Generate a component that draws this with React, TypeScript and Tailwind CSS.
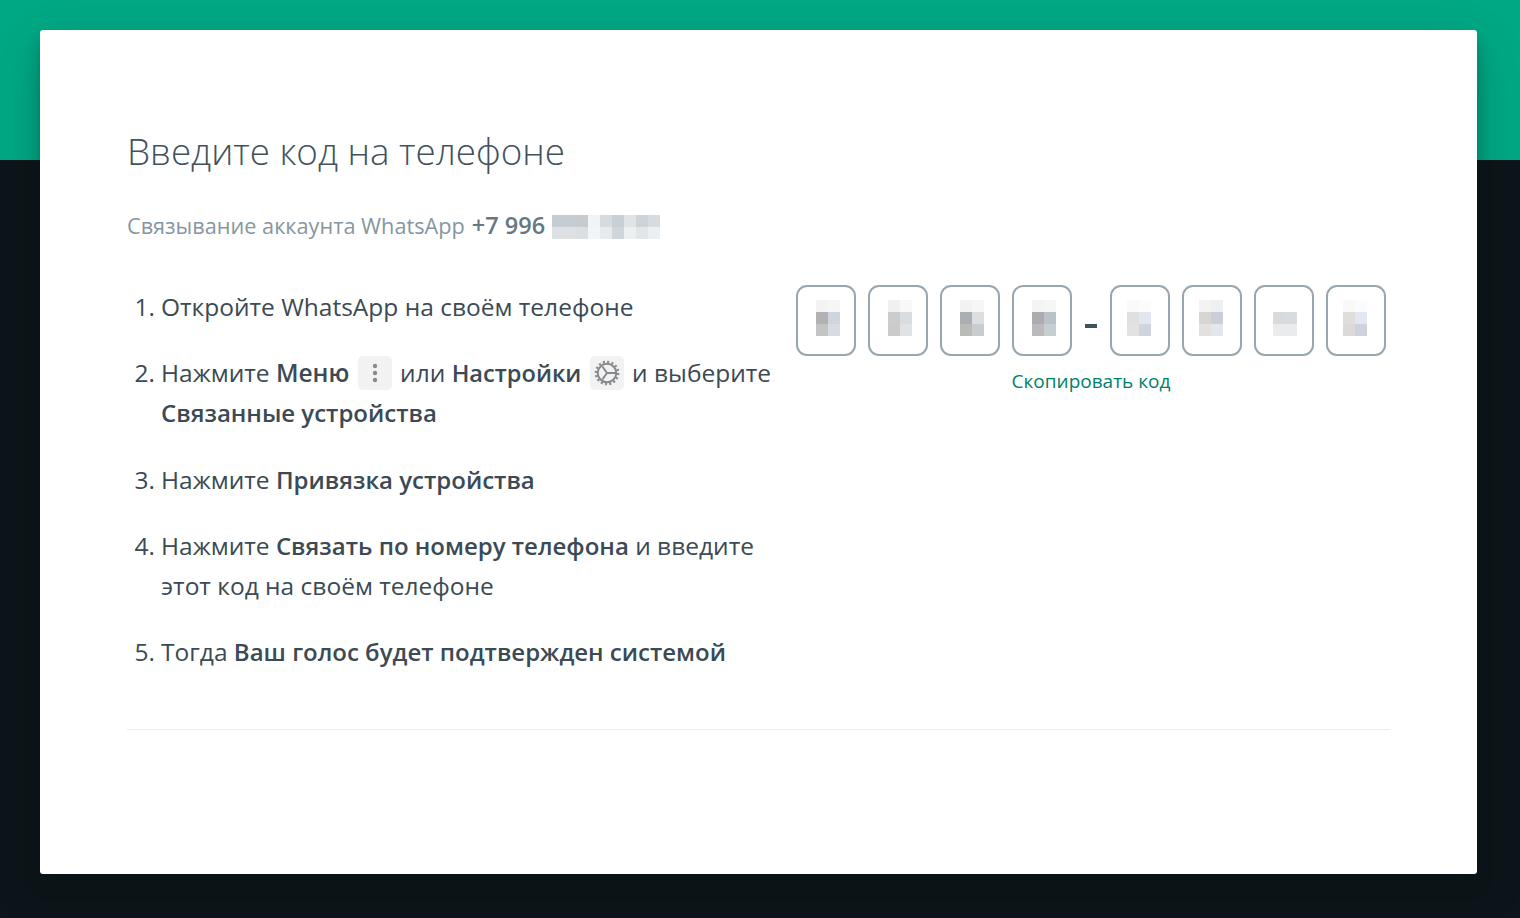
const FONT = "font-['Open_Sans','Noto_Sans',sans-serif]";

const phoneCells = [
  "bg-[#c5cdd2]", "bg-[#c5cdd2]", "bg-[#c5cbcf]", "bg-[#f0f4f8]", "bg-[#d5dbdf]", "bg-[#c8d0d6]", "bg-[#e0e4e6]", "bg-[#ccd4da]", "bg-[#d5dbdf]",
  "bg-[#dde1e4]", "bg-[#dde1e4]", "bg-[#dcdfe1]", "bg-[#f1f5f8]", "bg-[#e8ebec]", "bg-[#cfd6dc]", "bg-[#edf0f0]", "bg-[#e2e6e9]", "bg-[#ebeff2]",
];

const firstGroup = [
  { pad: "pl-[18px]", cells: ["bg-[#f3f3f4]", "bg-[#f6f6f7]", "bg-[#b2b2b3]", "bg-[#cfd5dd]", "bg-[#c4c4c5]", "bg-[#d8dce0]"] },
  { pad: "pl-[18px]", cells: ["bg-[#f0f0f0]", "bg-[#f8f8f8]", "bg-[#cccccc]", "bg-[#d9dde0]", "bg-[#cbcbcb]", "bg-[#e0e3e6]"] },
  { pad: "pl-[18px]", cells: ["bg-[#f2f2f2]", "bg-[#f6f6f6]", "bg-[#acafb2]", "bg-[#dcdee1]", "bg-[#b9bbb9]", "bg-[#c8ccd0]"] },
  { pad: "pl-[18px]", cells: ["bg-[#f4f4f5]", "bg-[#f6f6f7]", "bg-[#aeabb0]", "bg-[#b9c2c9]", "bg-[#bcb9bd]", "bg-[#c6ced2]"] },
];

const secondGroup = [
  { pad: "pl-[15px]", cells: ["bg-[#fafafa]", "bg-[#fcfcfd]", "bg-[#e0e0e0]", "bg-[#e2e6f0]", "bg-[#e3e1e1]", "bg-[#d0d4de]"] },
  { pad: "pl-[15px]", cells: ["bg-[#f3f3f3]", "bg-[#eeeff0]", "bg-[#d8d6d4]", "bg-[#c9ced8]", "bg-[#e3e0e0]", "bg-[#e3e7eb]"] },
  { pad: "pl-[17px]", cells: ["bg-white", "bg-white", "bg-[#d8dadc]", "bg-[#d8dcdf]", "bg-[#e9ebec]", "bg-[#e8ecee]"] },
  { pad: "pl-[15px]", cells: ["bg-[#f9f9f9]", "bg-[#fcfcfe]", "bg-[#dfdedd]", "bg-[#e3e7f2]", "bg-[#dcdad9]", "bg-[#ced2dc]"] },
];

function CodeBox({ pad, cells }: { pad: string; cells: string[] }) {
  return (
    <div className={`flex h-[71px] w-[60px] items-center rounded-[11px] border-2 border-[#98a6af] pb-[5px] ${pad}`}>
      <div className="grid grid-cols-[12px_12px] grid-rows-[12px_12px_12px]">
        {cells.map((c, i) => (
          <div key={i} className={c} />
        ))}
      </div>
    </div>
  );
}

function IconChip({ children }: { children: React.ReactNode }) {
  return (
    <span className="mx-[2px] -mt-[2px] mb-[2px] inline-flex h-[34px] w-[34px] items-center justify-center rounded-[5px] bg-[#f2f2f2] align-middle">
      {children}
    </span>
  );
}

export default function App() {
  return (
    <div className={`h-[918px] overflow-hidden bg-[linear-gradient(#00a884_160px,#0c1519_160px)] px-[40px] pt-[30px] ${FONT}`}>
      <div className="h-[844px] w-[1437px] rounded-[3px] bg-white px-[87px] pt-[95px] shadow-[0_17px_50px_0_rgba(11,20,26,0.19),0_12px_15px_0_rgba(11,20,26,0.24)]">
        <h1 className="text-[36.8px] leading-[52px] font-light text-[#41525d]">Введите код на телефоне</h1>
        <div className="mt-[37px] flex h-[24px] items-center text-[21.7px] text-[#8696a0]">
          <span>Связывание аккаунта WhatsApp</span>
          <b className="ml-[7px] text-[23.5px] font-semibold text-[#667781]">+7 996</b>
          <div className="mt-[2px] ml-[7px] grid grid-cols-[repeat(9,12px)] grid-rows-[12px_12px]">
            {phoneCells.map((c, i) => (
              <div key={i} className={c} />
            ))}
          </div>
        </div>

        <div className="mt-[49px] flex">
          <ol className="w-[669px] text-[24.5px] leading-[40px] text-[#3b4a54]">
            <li className="flex">
              <span className="w-[35px] shrink-0 pr-[7px] text-right">1.</span>
              <span className="-ml-px">Откройте WhatsApp на своём телефоне</span>
            </li>
            <li className="mt-[26px] flex">
              <span className="w-[35px] shrink-0 pr-[7px] text-right">2.</span>
              <span className="-ml-px">
                Нажмите <b className="font-semibold">Меню</b>{" "}
                <IconChip>
                  <svg width="24" height="24" viewBox="0 0 24 24" fill="#868b90">
                    <circle cx="12" cy="5" r="2.2" />
                    <circle cx="12" cy="12" r="2.2" />
                    <circle cx="12" cy="19" r="2.2" />
                  </svg>
                </IconChip>{" "}
                или <b className="text-[23.6px] font-semibold">Настройки</b>{" "}
                <IconChip>
                  <svg width="26" height="26" viewBox="0 0 28 28" fill="none" stroke="#868b90" strokeWidth="2.2">
                    <circle cx="14" cy="14" r="10" />
                    <circle cx="14" cy="14" r="12" strokeWidth="2.6" strokeDasharray="2.2 2.5" />
                    <path d="M14 14L9 7M14 14L9 21M14 14H24" />
                  </svg>
                </IconChip>{" "}
                и выберите
                <br />
                <b className="text-[24px] font-semibold">Связанные устройства</b>
              </span>
            </li>
            <li className="mt-[27px] flex">
              <span className="w-[35px] shrink-0 pr-[7px] text-right">3.</span>
              <span className="-ml-px">
                Нажмите <b className="text-[24px] font-semibold">Привязка устройства</b>
              </span>
            </li>
            <li className="mt-[26px] flex">
              <span className="w-[35px] shrink-0 pr-[7px] text-right">4.</span>
              <span className="-ml-px">
                Нажмите <b className="text-[24px] font-semibold">Связать по номеру телефона</b> и введите
                <br />
                этот код на своём телефоне
              </span>
            </li>
            <li className="mt-[26px] flex">
              <span className="w-[35px] shrink-0 pr-[7px] text-right">5.</span>
              <span className="-ml-px">
                Тогда <b className="text-[24px] font-semibold">Ваш голос будет подтвержден системой</b>
              </span>
            </li>
          </ol>

          <div className="-mt-[2px] w-[590px]">
            <div className="flex items-center">
              <div className="flex gap-[12px]">
                {firstGroup.map((box, i) => (
                  <CodeBox key={i} pad={box.pad} cells={box.cells} />
                ))}
              </div>
              <div className="mx-[13px] mt-[10px] h-[4px] w-[13px] bg-[#41525d]" />
              <div className="flex gap-[12px]">
                {secondGroup.map((box, i) => (
                  <CodeBox key={i} pad={box.pad} cells={box.cells} />
                ))}
              </div>
            </div>
            <div className="mt-[12px] text-center text-[19px] leading-[26px] text-[#008069]">Скопировать код</div>
          </div>
        </div>

        <div className="mt-[57px] h-px bg-[#e9edef]" />
      </div>
    </div>
  );
}
